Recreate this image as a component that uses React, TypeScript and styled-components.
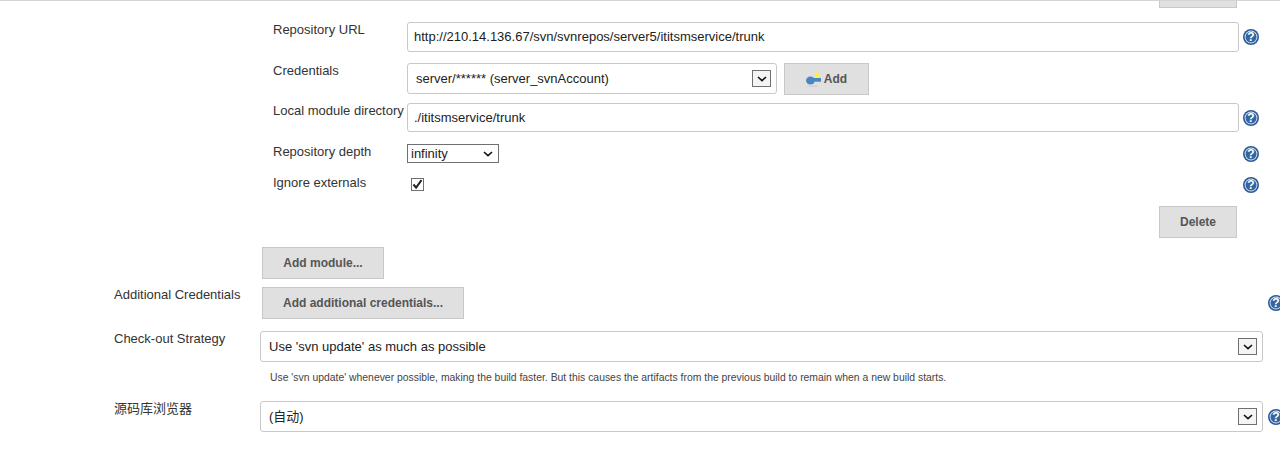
import React from "react";
import styled, { createGlobalStyle } from "styled-components";

const GlobalStyle = createGlobalStyle`
    html, body {
        margin: 0;
        padding: 0;
        background: #fff;
    }
    body {
        font-family: "Liberation Sans", Arial, "Noto Sans CJK SC", sans-serif;
        font-size: 13px;
        color: #333;
    }
`;

const HelpIcon: React.FC = () => (
    <HelpSvg viewBox="0 0 16 16" width="16" height="16">
        <circle cx="8" cy="8" r="8" fill="#2a5a9a" />
        <circle cx="8" cy="8" r="6.4" fill="#dfe8f3" />
        <circle cx="8" cy="8" r="5.5" fill="#33659f" />
        <text x="8" y="12.2" textAnchor="middle" fontSize="12" fontWeight="700" fill="#fff" fontFamily="Liberation Sans">?</text>
    </HelpSvg>
);

const KeyIcon: React.FC = () => (
    <svg viewBox="0 0 16 16" width="16" height="16">
        <ellipse cx="7" cy="15" rx="6" ry="0.8" fill="#cfcfcf" />
        <circle cx="11" cy="4" r="2.4" fill="#ffef4a" />
        <ellipse cx="4.5" cy="9.5" rx="4.5" ry="4" fill="#4a86c2" />
        <rect x="6" y="7" width="9" height="3" fill="#4a86c2" />
        <rect x="9" y="10" width="6" height="1" fill="#7f9dbd" />
    </svg>
);

const Chevron: React.FC = () => (
    <svg viewBox="0 0 10 6" width="10" height="6">
        <path d="M1 1l4 3.6L9 1" fill="none" stroke="#111" strokeWidth="1.6" />
    </svg>
);

type SelectProps = { value: string; height: number };

const RoundSelect: React.FC<SelectProps> = ({ value, height }) => (
    <SelectWrap $height={height}>
        <SelectField defaultValue={value}>
            <option>{value}</option>
        </SelectField>
        <ArrowBox>
            <Chevron />
        </ArrowBox>
    </SelectWrap>
);

const App: React.FC = () => {
    return (
        <Page>
            <GlobalStyle />
            <TopBar>
                <StubButton />
            </TopBar>

            <ModuleBlock>
                <ModuleRow $height={30} $gap={14}>
                    <ModuleLabel>Repository URL</ModuleLabel>
                    <TextField $lift={2} defaultValue="http://210.14.136.67/svn/svnrepos/server5/ititsmservice/trunk" />
                    <HelpCell><HelpIcon /></HelpCell>
                </ModuleRow>

                <ModuleRow $height={31} $gap={11}>
                    <ModuleLabel>Credentials</ModuleLabel>
                    <CredentialsCell>
                        <CredentialsSelect>
                            <RoundSelect value="server/****** (server_svnAccount)" height={31} />
                        </CredentialsSelect>
                        <GreyButton $width={85} $height={32}>
                            <KeyIcon />
                            Add
                        </GreyButton>
                    </CredentialsCell>
                </ModuleRow>

                <ModuleRow $height={29} $gap={9}>
                    <ModuleLabel>Local module directory</ModuleLabel>
                    <TextField $lift={0} defaultValue="./ititsmservice/trunk" />
                    <HelpCell><HelpIcon /></HelpCell>
                </ModuleRow>

                <ModuleRow $height={19} $gap={12}>
                    <ModuleLabel>Repository depth</ModuleLabel>
                    <DepthSelect>
                        <span>infinity</span>
                        <Chevron />
                    </DepthSelect>
                    <HelpCell><HelpIcon /></HelpCell>
                </ModuleRow>

                <ModuleRow $height={14} $gap={14}>
                    <ModuleLabel $top={-2}>Ignore externals</ModuleLabel>
                    <CheckCell>
                        <CheckBox>
                            <svg viewBox="0 0 11 11" width="11" height="11">
                                <path d="M1.5 5.5l2.6 3.2L9.5 1.2" fill="none" stroke="#222" strokeWidth="2" />
                            </svg>
                        </CheckBox>
                    </CheckCell>
                    <HelpCell><HelpIcon /></HelpCell>
                </ModuleRow>

                <DeleteRow>
                    <GreyButton $width={78} $height={32}>Delete</GreyButton>
                </DeleteRow>
            </ModuleBlock>

            <AddModuleRow>
                <GreyButton $width={122} $height={32}>Add module...</GreyButton>
            </AddModuleRow>

            <OuterRow $gap={8} $height={32}>
                <OuterLabel>Additional Credentials</OuterLabel>
                <OuterControl>
                    <GreyButton $width={202} $height={32}>Add additional credentials...</GreyButton>
                </OuterControl>
                <OuterHelp><HelpIcon /></OuterHelp>
            </OuterRow>

            <OuterRow $gap={12} $height={31}>
                <OuterLabel>Check-out Strategy</OuterLabel>
                <WideSelect>
                    <RoundSelect value="Use 'svn update' as much as possible" height={31} />
                </WideSelect>
            </OuterRow>

            <HintText>
                Use 'svn update' whenever possible, making the build faster. But this causes the artifacts from the previous build to remain when a new build starts.
            </HintText>

            <OuterRow $gap={17} $height={31}>
                <OuterLabel>源码库浏览器</OuterLabel>
                <WideSelect>
                    <RoundSelect value="(自动)" height={31} />
                </WideSelect>
                <OuterHelp $top={8}><HelpIcon /></OuterHelp>
            </OuterRow>
        </Page>
    );
};

export default App;

const Page = styled.div`
    width: 1280px;
    height: 454px;
    overflow: hidden;
    background: #fff;
`;

const TopBar = styled.div`
    height: 7px;
    border-top: 1px solid #d3d7cf;
    padding-left: 1159px;
`;

const StubButton = styled.div`
    box-sizing: border-box;
    width: 78px;
    height: 7px;
    background: #e0e0e0;
    border: 1px solid #c8c8c8;
    border-top: none;
`;

const ModuleBlock = styled.div`
    padding-left: 273px;
`;

const ModuleRow = styled.div<{ $height: number; $gap: number }>`
    display: grid;
    grid-template-columns: 134px 832px 20px;
    height: ${(p) => p.$height}px;
    margin-top: ${(p) => p.$gap}px;
`;

const ModuleLabel = styled.div<{ $top?: number }>`
    font-size: 13px;
    line-height: 15px;
    margin-top: ${(p) => p.$top ?? 0}px;
    white-space: nowrap;
    color: #333;
`;

const TextField = styled.input<{ $lift: number }>`
    box-sizing: border-box;
    width: 832px;
    height: 100%;
    padding: 0 6px ${(p) => p.$lift}px;
    border: 1px solid #c8c8c8;
    border-radius: 3px;
    font: 13px "Liberation Sans", Arial, sans-serif;
    color: #222;
    outline: none;
`;

const HelpCell = styled.div`
    display: flex;
    align-items: center;
    justify-content: flex-end;
    height: 100%;
`;

const HelpSvg = styled.svg`
    display: block;
    flex: none;
`;

const CredentialsCell = styled.div`
    display: flex;
    align-items: flex-start;
    gap: 7px;
`;

const CredentialsSelect = styled.div`
    width: 370px;
`;

const SelectWrap = styled.div<{ $height: number }>`
    position: relative;
    height: ${(p) => p.$height}px;
`;

const SelectField = styled.select`
    box-sizing: border-box;
    display: block;
    width: 100%;
    height: 100%;
    padding: 0 8px;
    appearance: none;
    background: #fff;
    border: 1px solid #c8c8c8;
    border-radius: 3px;
    font: 13px "Liberation Sans", Arial, "Noto Sans CJK SC", sans-serif;
    color: #222;
    outline: none;
`;

const ArrowBox = styled.div`
    position: absolute;
    top: 7px;
    right: 6px;
    box-sizing: border-box;
    width: 19px;
    height: 17px;
    display: flex;
    align-items: center;
    justify-content: center;
    background: #f4f4f4;
    border: 1px solid #707070;
    pointer-events: none;
`;

const GreyButton = styled.button<{ $width: number; $height: number }>`
    box-sizing: border-box;
    display: inline-flex;
    align-items: center;
    justify-content: center;
    gap: 2px;
    width: ${(p) => p.$width}px;
    height: ${(p) => p.$height}px;
    padding: 0;
    background: #e0e0e0;
    border: 1px solid #c8c8c8;
    font: 700 12px "Liberation Sans", Arial, sans-serif;
    color: #555;
`;

const DepthSelect = styled.div`
    box-sizing: border-box;
    display: flex;
    align-items: center;
    justify-content: space-between;
    width: 92px;
    height: 19px;
    padding: 0 5px 0 3px;
    border: 1px solid #707070;
    background: #fff;
    font-size: 13px;
    color: #222;
`;

const CheckCell = styled.div`
    padding: 1px 0 0 4px;
`;

const CheckBox = styled.div`
    box-sizing: border-box;
    display: flex;
    align-items: center;
    justify-content: center;
    width: 13px;
    height: 13px;
    border: 1px solid #707070;
    background: #fff;
`;

const DeleteRow = styled.div`
    display: flex;
    justify-content: flex-start;
    padding-left: 886px;
    margin-top: 15px;
`;

const AddModuleRow = styled.div`
    padding-left: 262px;
    margin-top: 9px;
`;

const OuterRow = styled.div<{ $gap: number; $height: number }>`
    position: relative;
    display: flex;
    height: ${(p) => p.$height}px;
    margin-top: ${(p) => p.$gap}px;
    padding-left: 114px;
`;

const OuterLabel = styled.div`
    flex: none;
    width: 146px;
    font-size: 13px;
    line-height: 15px;
    color: #333;
`;

const OuterControl = styled.div`
    padding-left: 2px;
`;

const WideSelect = styled.div`
    width: 1003px;
`;

const OuterHelp = styled.div<{ $top?: number }>`
    position: absolute;
    left: 1268px;
    top: ${(p) => p.$top ?? 8}px;
`;

const HintText = styled.div`
    padding-left: 270px;
    margin-top: 10px;
    font-size: 10.4px;
    line-height: 12px;
    color: #444;
`;
